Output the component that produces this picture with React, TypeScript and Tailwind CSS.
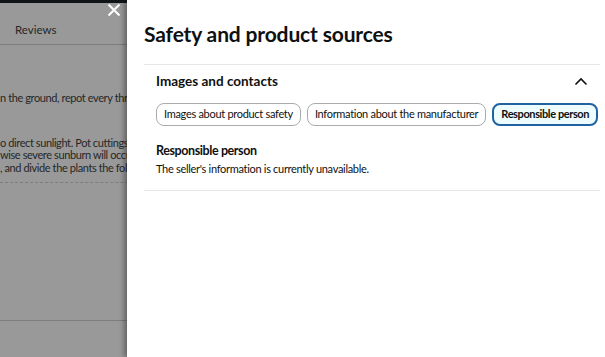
import React from 'react';

const tabs = ["Images about product safety", "Information about the manufacturer", "Responsible person"];

const ChevronUp = () => (
    <svg width="14" height="9" viewBox="0 0 14 9" fill="none" aria-hidden="true">
        <path d="M1.5 7.5L7 2L12.5 7.5" stroke="#0f1111" strokeWidth="1.6"/>
    </svg>
);

const CloseIcon = () => (
    <svg width="14" height="14" viewBox="0 0 14 14" fill="none" aria-hidden="true">
        <path d="M1.5 1.5L12.5 12.5M12.5 1.5L1.5 12.5" stroke="#fff" strokeWidth="2"/>
    </svg>
);

// page behind the sheet, only its left edge shows
const BackgroundPage = () => (
    <div className="flex flex-col h-full text-[#3f4343]">
        <div className="h-[3px] bg-[#1b2129]"/>
        <div className="h-[42px] pt-[20px] pl-[15px] border-b border-[#cfd2d2] text-[11.5px] leading-[14px]">
            Reviews
        </div>
        <div className="w-[127px] overflow-hidden flex flex-col text-[11px] leading-[12.5px] tracking-[-0.4px] whitespace-nowrap">
            <p className="mt-[47px]">n the ground, repot every three years</p>
            <p className="mt-[32px]">o direct sunlight. Pot cuttings from</p>
            <p>wise severe sunburn will occur on</p>
            <p>, and divide the plants the following</p>
        </div>
        <div className="mt-[8px] border-b border-dashed border-[#cfd2d2]"/>
        <div className="mt-[137px] border-b border-[#cfd2d2]"/>
    </div>
);

const SafetySheet = () => (
    <div className="absolute top-0 right-0 bottom-0 w-[478px] bg-white pl-[17px] pr-[5px] pt-[20px] shadow-[-3px_0_5px_rgba(0,0,0,0.35)] text-[#0f1111]">
        <h2 className="text-[21px] leading-[28px] font-bold tracking-[-0.15px]">Safety and product sources</h2>
        <div className="mt-[16px] border-t border-b border-[#e7e7e7] px-[12px] pb-[14px]">
            <div className="h-[32px] flex items-center justify-between">
                <span className="text-[13.5px] font-bold">Images and contacts</span>
                <ChevronUp/>
            </div>
            <div className="mt-[6px] flex gap-[6px]">
                {tabs.map((t, i) => (
                    <button
                        key={t}
                        className={i === 2
                            ? "h-[23px] px-[7px] rounded-[8px] border-2 border-[#2162a1] bg-[#edfdff] text-[11px] font-bold tracking-[-0.4px] whitespace-nowrap"
                            : "h-[23px] px-[7px] rounded-[8px] border border-[#a9acac] bg-white text-[11px] tracking-[-0.3px] whitespace-nowrap"}
                    >
                        {t}
                    </button>
                ))}
            </div>
            <h3 className="mt-[17px] text-[12.5px] leading-[16px] font-bold tracking-[-0.4px]">Responsible person</h3>
            <p className="mt-[3px] text-[11px] leading-[14px] tracking-[-0.3px]">The seller's information is currently unavailable.</p>
        </div>
    </div>
);

export default function App() {
    return (
        <div className="relative w-[605px] h-[357px] overflow-hidden bg-white" style={{fontFamily: 'Lato, "Liberation Sans", sans-serif'}}>
            <BackgroundPage/>
            <div className="absolute inset-0 bg-black/40"/>
            <button className="absolute left-[107px] top-[3px] p-0" aria-label="Close">
                <CloseIcon/>
            </button>
            <SafetySheet/>
        </div>
    );
}
